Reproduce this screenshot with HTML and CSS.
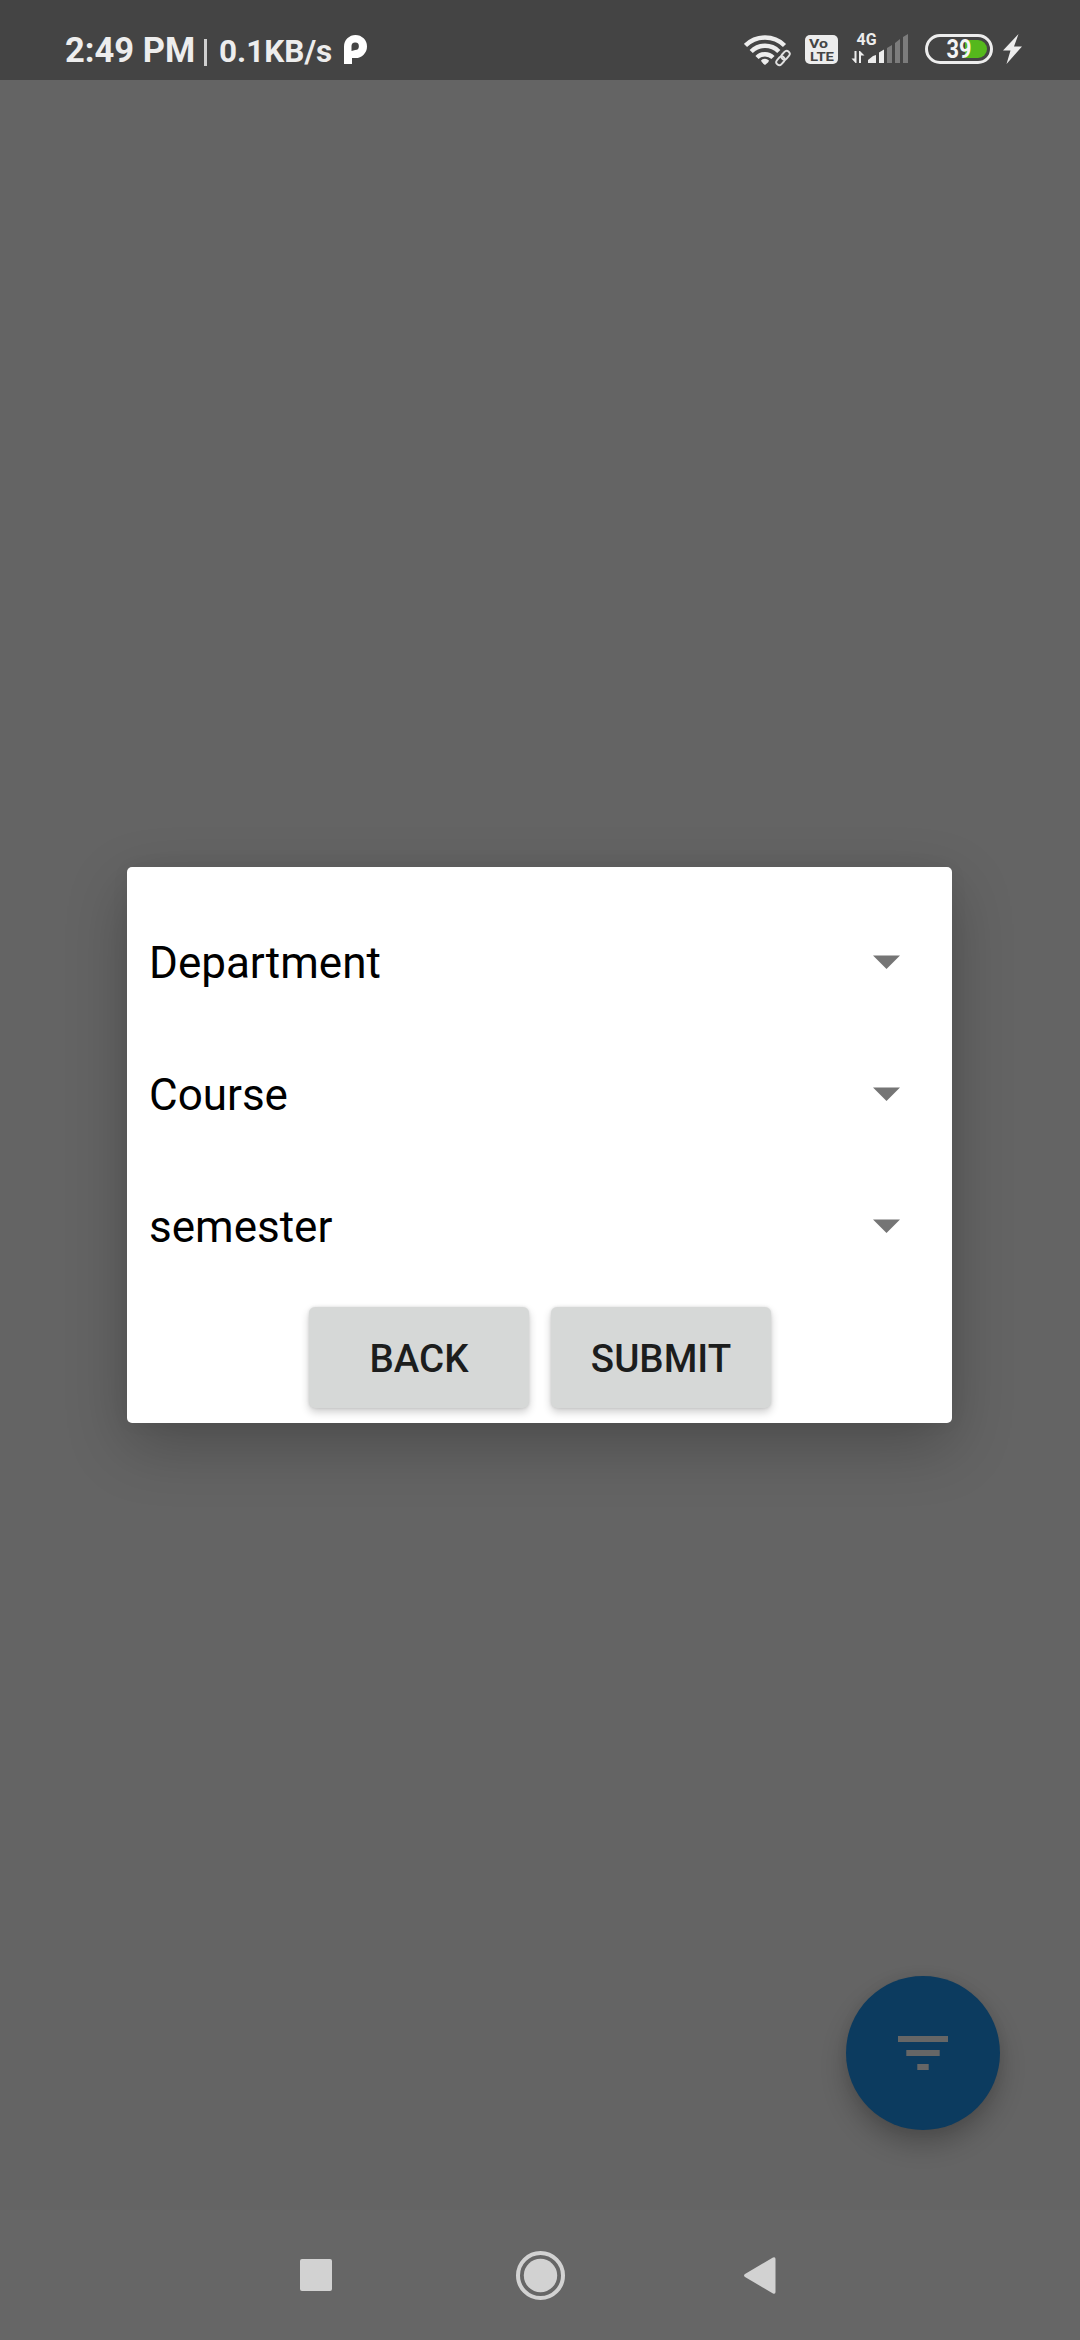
FILE: index.html
```html
<!DOCTYPE html>
<html lang="en">
<head>
<meta charset="utf-8">
<title>Filter</title>
<link rel="stylesheet" href="styles.css">
</head>
<body>
<div class="screen">
  <header class="status">
    <div class="status-left">
      <span class="time">2:49 PM</span>
      <span class="divider"></span>
      <span class="speed">0.1KB/s</span>
      <svg class="app-icon" width="23" height="30" viewBox="0 0 23 30"><path fill="#fff" fill-rule="evenodd" d="M0 29V11.500a11.500 11.500 0 1 1 11.500 11.500H8v6zM7.500 16V10.800a3.700 3.700 0 1 1 3.700 4.200z"/></svg>
    </div>
    <div class="status-right">
      <svg class="wifi" width="48" height="34" viewBox="0 0 48 34" fill="none" stroke="#ededed">
        <path stroke-width="4.500" d="M1.500 12.500a28 28 0 0 1 39 0M7.200 18.500a19.500 19.500 0 0 1 27.600 0M13 24.500a11.500 11.500 0 0 1 16 0"/>
        <path fill="#ededed" stroke="none" d="M17 27.500q4-3.500 8 0q0 1.500-4 4.500q-4-3-4-4.500z"/>
        <g transform="rotate(-48 39 25)" stroke="#444" stroke-width="5"><rect x="30.500" y="22" width="9.500" height="6" rx="3"/><rect x="38" y="22" width="9.500" height="6" rx="3"/></g>
        <g transform="rotate(-48 39 25)" stroke="#e0e0e0" stroke-width="1.900"><rect x="30.500" y="22" width="9.500" height="6" rx="3"/><rect x="38" y="22" width="9.500" height="6" rx="3"/></g>
      </svg>
      <svg class="volte" width="33" height="29" viewBox="0 0 33 29">
        <rect width="33" height="29" rx="5" fill="#ededed"/>
        <g class="volte-text"><text x="4" y="13" textLength="19" lengthAdjust="spacingAndGlyphs">Vo</text><text x="5" y="26" textLength="24" lengthAdjust="spacingAndGlyphs">LTE</text></g>
      </svg>
      <svg class="signal" width="58" height="38" viewBox="0 -6 58 38">
        <text class="net" x="5.500" y="12.500" textLength="20" lengthAdjust="spacingAndGlyphs">4G</text>
        <path fill="#ededed" d="M3.500 19h2v12h-1L.500 26.500h3zM8 31V19h1l4.500 4.500H10V31zM17 31v-3l5-4 3-1v8zM28 31V20.500l5-3V31z"/>
        <path fill="#7c7c7c" d="M36 31V16l5-3v18zM44 31V11l5-4v24zM52 31V5l5-3v29z"/>
      </svg>
      <svg class="battery" width="68" height="30" viewBox="0 0 68 30">
        <rect x="1.500" y="1.500" width="65" height="27" rx="13.500" fill="none" stroke="#ededed" stroke-width="3"/>
        <path fill="#55b81c" d="M40 6h13a9 9 0 0 1 0 18H40z"/>
        <text class="level" x="21.500" y="24" textLength="25" lengthAdjust="spacingAndGlyphs">39</text>
      </svg>
      <svg width="19" height="30" viewBox="0 0 19 30"><path fill="#ededed" d="M15.500 0L0 16.500h7.500L3.500 30L19 12.500h-8z"/></svg>
    </div>
  </header>

  <main class="content">
    <section class="dialog">
      <div class="spinner"><span>Department</span><svg width="27" height="14" viewBox="0 0 27 14"><path d="M0 .500h27L13.500 14z"/></svg></div>
      <div class="spinner"><span>Course</span><svg width="27" height="14" viewBox="0 0 27 14"><path d="M0 .500h27L13.500 14z"/></svg></div>
      <div class="spinner"><span>semester</span><svg width="27" height="14" viewBox="0 0 27 14"><path d="M0 .500h27L13.500 14z"/></svg></div>
      <div class="actions"><button class="btn">BACK</button><button class="btn">SUBMIT</button></div>
    </section>
    <button class="fab" aria-label="Filter"><svg width="50" height="34" viewBox="0 0 50 34"><path fill="#666" d="M0 0h50v6H0zM8.300 14h33.400v6H8.300zM19.300 28h11.400v6H19.300z"/></svg></button>
  </main>

  <nav class="nav">
    <svg width="32" height="32" viewBox="0 0 32 32"><rect width="32" height="32" rx="2"/></svg>
    <svg class="home" width="49" height="49" viewBox="0 0 49 49"><circle cx="24.500" cy="24.500" r="22.500" fill="none" stroke="#d2d2d2" stroke-width="4"/><circle cx="24.500" cy="24.500" r="16.700"/></svg>
    <svg width="32" height="37" viewBox="0 0 32 37"><path d="M29 .500Q31.500-.500 31.500 2v33q0 2.500-2.500 1.500L1 20q-2-1.500 0-3z"/></svg>
  </nav>
</div>
</body>
</html>
```

FILE: styles.css
```css
body { margin: 0; font-family: Roboto, sans-serif; }
button { border: 0; padding: 0; font-family: inherit; }
svg { display: block; flex: none; }

.screen {
  width: 1080px;
  height: 2340px;
  display: flex;
  flex-direction: column;
  background: #646464;
  overflow: hidden;
}

.status {
  height: 80px;
  flex: none;
  box-sizing: border-box;
  padding: 0 58px 0 65px;
  display: flex;
  justify-content: space-between;
  background: #444;
  color: #ededed;
}
.status-left { display: flex; align-items: baseline; height: 80px; line-height: 100px; white-space: nowrap; }
.time { font-size: 34.500px; font-weight: 700; width: 130px; }
.divider { width: 3px; height: 27px; margin: 39px 12px 0 9px; background: #d0d0d0; align-self: flex-start; }
.speed { font-size: 31.500px; font-weight: 700; width: 113px; }
.app-icon { align-self: flex-start; margin: 35px 0 0 12px; }
.status-right { display: flex; align-items: flex-start; padding-top: 34px; }
.wifi { margin: -1px 13px 0 0; }
.volte { margin: 1px 13px 0 0; }
.volte-text { font-size: 13.500px; font-weight: 700; fill: #444; }
.signal { margin: -8px 16px 0 0; }
.net { font-size: 17px; font-weight: 700; fill: #ededed; }
.battery { margin-right: 10px; }
.level { font-size: 25px; font-weight: 700; fill: #f4f4f4; }

.content {
  flex: 1;
  display: flex;
  flex-direction: column;
  justify-content: space-between;
  padding: 787px 80px 80px 127px;
}
.dialog {
  width: 825px;
  height: 556px;
  box-sizing: border-box;
  padding-top: 30px;
  background: #fff;
  border-radius: 5px;
  box-shadow: 0 22px 62px rgba(0, 0, 0, .24), 0 0 20px rgba(0, 0, 0, .04);
}
.spinner {
  height: 132px;
  padding: 0 52.500px 0 22px;
  display: flex;
  align-items: center;
  justify-content: space-between;
  font-size: 44px;
  line-height: 132px;
  color: #000;
}
.spinner svg { fill: #757575; margin-top: -2px; }
.actions { display: flex; justify-content: center; gap: 22px; padding: 14px 0 0 1px; }
.btn {
  width: 220px;
  height: 101px;
  padding-top: 1px;
  border-radius: 6px;
  background: #d6d8d7;
  color: #1c1d1d;
  font-size: 38.500px;
  font-weight: 500;
  box-shadow: 0 4px 8px rgba(0, 0, 0, .2), 0 0 3px rgba(0, 0, 0, .12);
}
.fab {
  align-self: flex-end;
  width: 154px;
  height: 154px;
  border-radius: 50%;
  display: flex;
  align-items: center;
  justify-content: center;
  background: #0c3b5f;
  box-shadow: 0 14px 26px rgba(0, 0, 0, .24), 0 0 12px rgba(0, 0, 0, .06);
}

.nav {
  height: 130px;
  flex: none;
  box-sizing: border-box;
  padding: 0 304px 0 300px;
  display: flex;
  align-items: center;
  justify-content: space-between;
  background: #666;
  fill: #d2d2d2;
}
.home { margin-left: 5px; }
```
